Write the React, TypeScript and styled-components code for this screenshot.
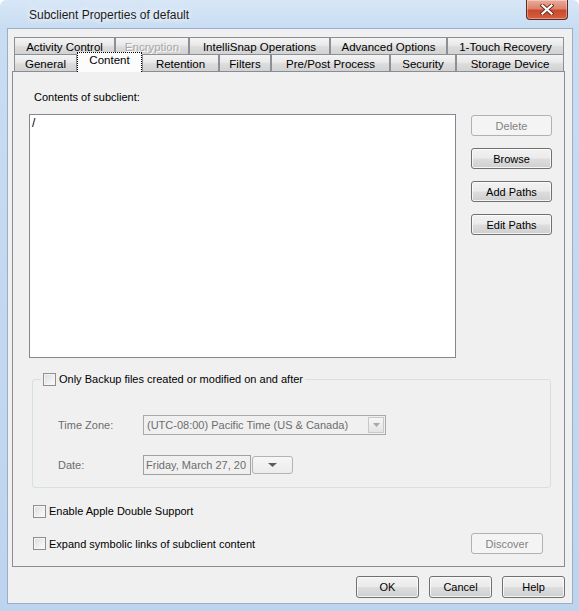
import React from 'react';
import styled, { createGlobalStyle, css } from 'styled-components';

const GlobalStyle = createGlobalStyle`
  html, body { margin: 0; padding: 0; background: #ffffff; }
  body { font-family: "Liberation Sans", Arial, sans-serif; }
`;

const Window = styled.div`
  box-sizing: border-box;
  width: 579px;
  height: 611px;
  display: flex;
  flex-direction: column;
  padding: 0 6px 7px 7px;
  background: linear-gradient(180deg, #d8e7f7 0px, #c8dcf2 28px, #bed4ee 100%);
  border-radius: 6px 6px 0 0;
  overflow: hidden;
`;

const TitleBar = styled.div`
  height: 28px;
  display: flex;
  align-items: flex-start;
  justify-content: space-between;
`;

const Title = styled.div`
  padding: 8px 0 0 22px;
  font-size: 12px;
  color: #1b1b1b;
  text-shadow: 0 0 6px #ffffff, 0 0 10px #ffffff;
`;

const CloseButton = styled.div`
  box-sizing: border-box;
  width: 42px;
  height: 20px;
  margin-right: 5px;
  border: 1px solid #5b2b22;
  border-top: none;
  border-radius: 0 0 4px 4px;
  background: linear-gradient(180deg, #ebab9c 0%, #dc836b 45%, #c94a2f 55%, #d4603f 100%);
  box-shadow: inset 0 0 0 1px rgba(255, 255, 255, 0.35);
  display: flex;
  align-items: center;
  justify-content: center;
`;

const Client = styled.div`
  flex: 1;
  box-sizing: border-box;
  border: 1px solid #9aaec6;
  background: #f0f0f0;
  display: flex;
  flex-direction: column;
  padding: 8px 7px 0 4px;
  font-size: 11px;
  color: #000;
`;

const TabStrip = styled.div`
  padding: 0 1px 0 2px;
  display: flex;
  flex-direction: column;
`;

const TabRow = styled.div`
  display: flex;
  align-items: flex-end;
  height: 17px;
`;

const Tab = styled.div<{ $w: number; $active?: boolean; $disabled?: boolean }>`
  box-sizing: border-box;
  flex: none;
  width: ${p => p.$w}px;
  height: 17px;
  border: 1px solid #8c8f96;
  border-bottom: none;
  background: linear-gradient(180deg, #f4f4f4 0%, #e9e9e9 45%, #dcdcdc 55%, #d2d2d2 100%);
  display: flex;
  align-items: center;
  justify-content: center;
  font-size: 11.5px;
  padding-top: 1px;
  color: ${p => (p.$disabled ? '#a8a8a8' : '#000')};
  text-shadow: ${p => (p.$disabled ? '1px 1px 0 #ffffff' : 'none')};
  white-space: nowrap;
  ${p =>
    p.$active &&
    css`
      position: relative;
      z-index: 1;
      height: 20px;
      margin-bottom: -1px;
      border: 1px dotted #000;
      border-bottom: none;
      background: #fcfcfc;
      align-items: flex-start;
      padding-top: 1px;
    `}
`;

const Panel = styled.div`
  box-sizing: border-box;
  border: 1px solid #898c95;
  background: #f0f0f0;
  padding: 18px 0 12px 16px;
  display: flex;
  flex-direction: column;
`;

const FieldLabel = styled.div`
  height: 14px;
  line-height: 14px;
  padding-left: 5px;
`;

const ContentRow = styled.div`
  display: flex;
  gap: 15px;
  margin-top: 10px;
`;

const ListBox = styled.div`
  box-sizing: border-box;
  width: 427px;
  height: 244px;
  border: 1px solid #828790;
  background: #ffffff;
  padding: 1px 0 0 2px;
  font-size: 12px;
  line-height: 14px;
`;

const ButtonColumn = styled.div`
  display: flex;
  flex-direction: column;
  gap: 12px;
  padding-top: 1px;
`;

const Button = styled.button<{ $w: number; $h?: number }>`
  box-sizing: border-box;
  width: ${p => p.$w}px;
  height: ${p => p.$h ?? 21}px;
  padding: 0;
  border: 1px solid #707070;
  border-radius: 3px;
  background: linear-gradient(180deg, #f2f2f2 0%, #ebebeb 48%, #dddddd 52%, #cfcfcf 100%);
  box-shadow: inset 0 0 0 1px rgba(252, 252, 252, 0.8);
  font-family: "Liberation Sans", Arial, sans-serif;
  font-size: 11px;
  color: #000;

  &:disabled {
    border-color: #adb2b5;
    background: #f4f4f4;
    box-shadow: none;
    color: #838383;
  }
`;

const Group = styled.fieldset`
  box-sizing: border-box;
  width: 519px;
  height: 116px;
  margin: 14px 0 0 3px;
  padding: 0 0 0 8px;
  border: 1px solid #d5dfe5;
  border-radius: 3px;
  min-width: 0;
`;

const Legend = styled.legend`
  padding: 0 2px;
  display: flex;
  align-items: center;
  gap: 3px;
  height: 14px;
`;

const Box = styled.span`
  box-sizing: border-box;
  flex: none;
  display: inline-block;
  width: 13px;
  height: 13px;
  border: 1px solid #8e8f8f;
  background: linear-gradient(135deg, #dcdcdc 0%, #f0f0f0 60%, #fbfbfb 100%);
  box-shadow: inset 0 0 0 1px #f4f4f4;
`;

const GroupGrid = styled.div`
  display: grid;
  grid-template-columns: 85px auto;
  grid-auto-rows: 20px;
  row-gap: 20px;
  align-items: center;
  margin-top: 29px;
  padding-left: 17px;
  color: #6d6d6d;
`;

const Combo = styled.div`
  box-sizing: border-box;
  width: 243px;
  height: 20px;
  border: 1px solid #a9a9a9;
  background: #f0f0f0;
  display: flex;
  align-items: center;
  justify-content: space-between;
  padding: 0 1px 0 3px;
  font-size: 11px;
  color: #6d6d6d;
`;

const ComboArrow = styled.div`
  box-sizing: border-box;
  width: 16px;
  height: 16px;
  border: 1px solid #c8c8c8;
  background: linear-gradient(180deg, #f6f6f6, #e4e4e4);
  display: flex;
  align-items: center;
  justify-content: center;
`;

const DateRow = styled.div`
  display: flex;
  align-items: center;
`;

const DateField = styled.div`
  box-sizing: border-box;
  width: 108px;
  height: 20px;
  border: 1px solid #a0a0a0;
  background: #f0f0f0;
  padding: 0 0 0 2px;
  line-height: 18px;
  font-size: 11px;
  white-space: nowrap;
  color: #6d6d6d;
`;

const DateButton = styled.div`
  box-sizing: border-box;
  width: 41px;
  height: 18px;
  margin-left: 1px;
  border: 1px solid #b3b3b3;
  border-radius: 3px;
  background: linear-gradient(180deg, #f6f6f6, #ececec);
  display: flex;
  align-items: center;
  justify-content: center;
`;

const CheckRow = styled.div<{ $top: number }>`
  box-sizing: border-box;
  width: 514px;
  margin-top: ${p => p.$top}px;
  padding-left: 4px;
  display: flex;
  align-items: center;
  justify-content: space-between;
`;

const CheckLabel = styled.label`
  display: flex;
  align-items: center;
  gap: 3px;
  height: 14px;
  font-size: 11px;
`;

const Footer = styled.div`
  display: flex;
  justify-content: flex-end;
  gap: 10px;
  margin-top: 9px;
`;

const rowOne = [
  { label: 'Activity Control', w: 101 },
  { label: 'Encryption', w: 74, disabled: true },
  { label: 'IntelliSnap Operations', w: 141 },
  { label: 'Advanced Options', w: 117 },
  { label: '1-Touch Recovery', w: 117 },
];

const rowTwo = [
  { label: 'General', w: 63 },
  { label: 'Content', w: 65, active: true },
  { label: 'Retention', w: 77 },
  { label: 'Filters', w: 52 },
  { label: 'Pre/Post Process', w: 119 },
  { label: 'Security', w: 66 },
  { label: 'Storage Device', w: 108 },
];

const CloseGlyph = () => (
  <svg width="14" height="11" viewBox="0 0 14 11">
    <path d="M2.5 1.5 L11.5 9.5 M11.5 1.5 L2.5 9.5" stroke="#6b2a1e" strokeWidth="4" strokeLinecap="square" />
    <path d="M2.5 1.5 L11.5 9.5 M11.5 1.5 L2.5 9.5" stroke="#ffffff" strokeWidth="2.2" strokeLinecap="square" />
  </svg>
);

const DownTriangle = ({ color, w, h }: { color: string; w: number; h: number }) => (
  <svg width={w} height={h} viewBox={`0 0 ${w} ${h}`}>
    <polygon points={`0,0 ${w},0 ${w / 2},${h}`} fill={color} />
  </svg>
);

const App: React.FC = () => {
  return (
    <>
      <GlobalStyle />
      <Window>
        <TitleBar>
          <Title>Subclient Properties of default</Title>
          <CloseButton>
            <CloseGlyph />
          </CloseButton>
        </TitleBar>
        <Client>
          <TabStrip>
            <TabRow>
              {rowOne.map(t => (
                <Tab key={t.label} $w={t.w} $disabled={t.disabled}>
                  {t.label}
                </Tab>
              ))}
            </TabRow>
            <TabRow>
              {rowTwo.map(t => (
                <Tab key={t.label} $w={t.w} $active={t.active}>
                  {t.label}
                </Tab>
              ))}
            </TabRow>
          </TabStrip>
          <Panel>
            <FieldLabel>Contents of subclient:</FieldLabel>
            <ContentRow>
              <ListBox>/</ListBox>
              <ButtonColumn>
                <Button $w={81} disabled>Delete</Button>
                <Button $w={81}>Browse</Button>
                <Button $w={81}>Add Paths</Button>
                <Button $w={81}>Edit Paths</Button>
              </ButtonColumn>
            </ContentRow>
            <Group>
              <Legend>
                <Box />
                <span>Only Backup files created or modified on and after</span>
              </Legend>
              <GroupGrid>
                <span>Time Zone:</span>
                <Combo>
                  <span>(UTC-08:00) Pacific Time (US &amp; Canada)</span>
                  <ComboArrow>
                    <DownTriangle color="#a8a8a8" w={7} h={4} />
                  </ComboArrow>
                </Combo>
                <span>Date:</span>
                <DateRow>
                  <DateField>Friday, March 27, 20</DateField>
                  <DateButton>
                    <DownTriangle color="#5c5c5c" w={9} h={4} />
                  </DateButton>
                </DateRow>
              </GroupGrid>
            </Group>
            <CheckRow $top={16}>
              <CheckLabel>
                <Box />
                Enable Apple Double Support
              </CheckLabel>
            </CheckRow>
            <CheckRow $top={15}>
              <CheckLabel>
                <Box />
                Expand symbolic links of subclient content
              </CheckLabel>
              <Button $w={72} disabled>Discover</Button>
            </CheckRow>
          </Panel>
          <Footer>
            <Button $w={63} $h={22}>OK</Button>
            <Button $w={63} $h={22}>Cancel</Button>
            <Button $w={63} $h={22}>Help</Button>
          </Footer>
        </Client>
      </Window>
    </>
  );
};

export default App;
